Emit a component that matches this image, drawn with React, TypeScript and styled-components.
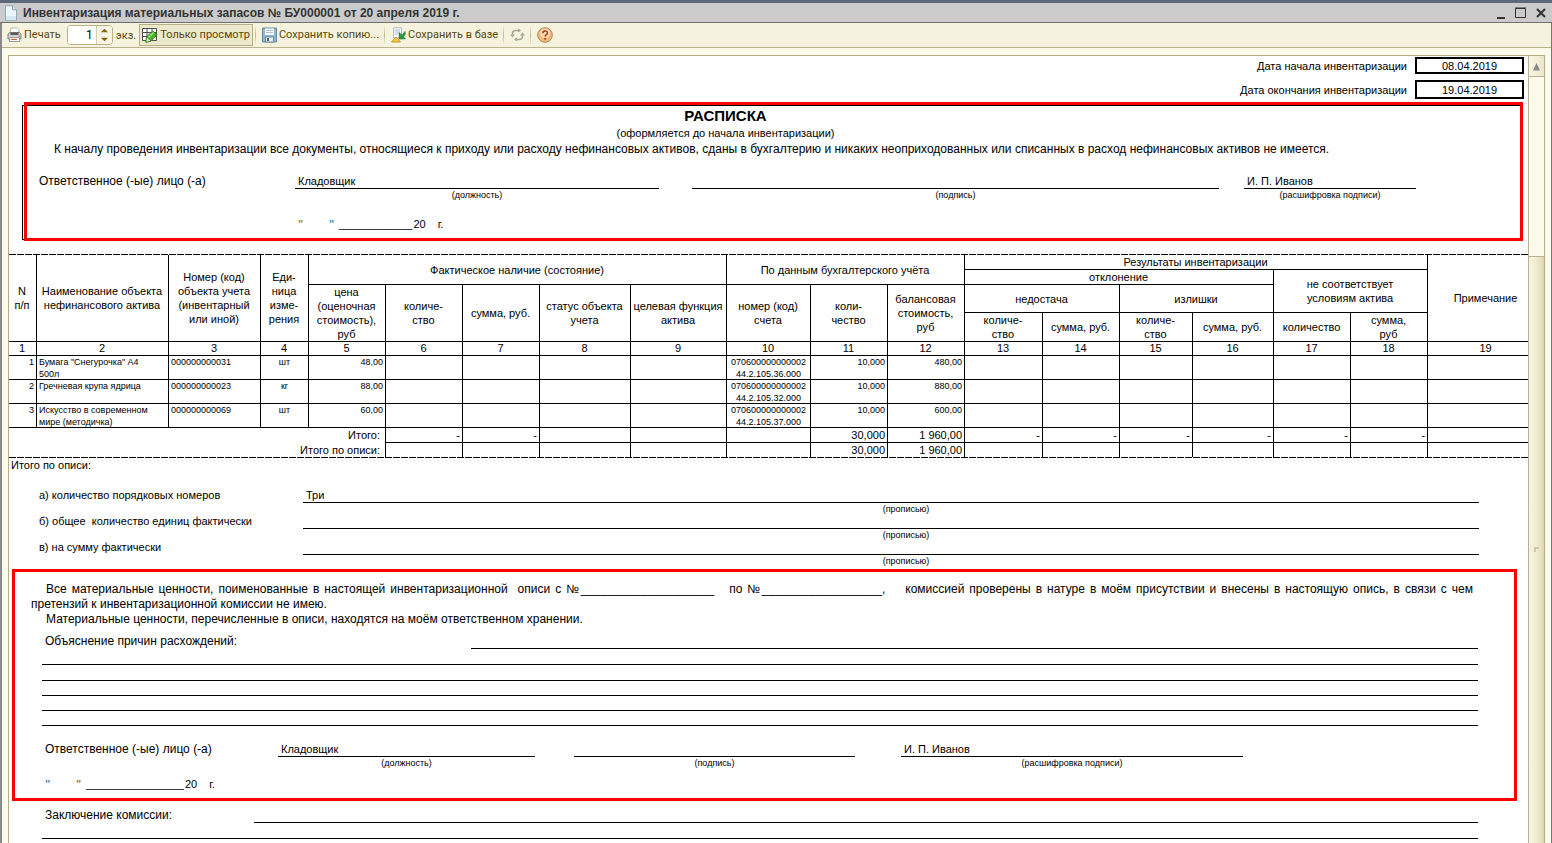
import React from "react";
import styled, { createGlobalStyle } from "styled-components";

const GlobalStyle = createGlobalStyle`
  *, *::before, *::after { box-sizing: border-box; }
  html, body { margin: 0; padding: 0; }
  body { background: #fcfaeb; overflow: hidden; }
  button, input { font: inherit; color: inherit; }
`;

/* ---------- window chrome ---------- */

const Window = styled.div`
  height: 100vh;
  display: flex;
  flex-direction: column;
  font-family: Roboto, "Liberation Sans", sans-serif;
  font-size: 11px;
  color: #000;
`;

const TitleBar = styled.header`
  flex: none;
  height: 23px;
  display: flex;
  align-items: center;
  padding: 0 4px 0 4px;
  background: #cbcbcb;
  border-top: 3px solid #5b6a7b;
  border-bottom: 1px solid #6e6e6e;
`;

const TitleText = styled.h1`
  flex: 1;
  margin: 0 0 0 4px;
  font-family: "Liberation Sans", Arial, sans-serif;
  font-size: 12px;
  line-height: 16px;
  font-weight: 700;
  color: #333;
  white-space: nowrap;
`;

const WindowButtons = styled.div`
  display: flex;
  gap: 6px;
`;

const WindowButton = styled.button`
  width: 14px;
  height: 14px;
  padding: 0;
  border: 0;
  background: none;
  display: flex;
`;

const Body = styled.div`
  flex: 1;
  min-height: 0;
  display: flex;
  flex-direction: column;
  border-left: 2px solid #8a8a8a;
  border-right: 1px solid #777;
  background: #fcfaeb;
`;

const Toolbar = styled.div`
  flex: none;
  height: 25px;
  display: flex;
  align-items: center;
  padding-left: 3px;
  background: #f5f2dd;
  border-bottom: 1px solid #b9b38c;
  color: #5a4a0c;
  white-space: nowrap;
`;

const ToolButton = styled.button<{ $pressed?: boolean }>`
  height: 22px;
  display: flex;
  align-items: center;
  gap: 2px;
  padding: 0 2px 0 1px;
  line-height: 16px;
  background: ${(p) => (p.$pressed ? "#ece8cb" : "transparent")};
  border: 1px solid ${(p) => (p.$pressed ? "#b5ae86" : "transparent")};
`;

const Separator = styled.span`
  width: 1px;
  height: 20px;
  margin: 0 4px 0 2px;
  background: linear-gradient(#f5f2dd, #bdb792, #f5f2dd);
`;

const Copies = styled.label`
  display: flex;
  align-items: center;
  gap: 3px;
  margin: 0 3px 0 3px;
`;

const Spinner = styled.span`
  display: flex;
  width: 46px;
  height: 20px;
  border: 1px solid #b9b187;
  border-radius: 4px;
  background: #fff;
  overflow: hidden;
`;

const CopiesInput = styled.input`
  width: 28px;
  padding: 0 3px 0 0;
  border: 0;
  outline: 0;
  background: #fff;
  color: #000;
  font-size: 12px;
  text-align: right;
`;

const Steps = styled.span`
  flex: 1;
  display: flex;
  flex-direction: column;
  border-left: 1px solid #d6d0b0;
  background: #f8f5e4;
`;

const StepButton = styled.button`
  flex: 1;
  display: flex;
  align-items: center;
  justify-content: center;
  padding: 0;
  border: 0;
  background: none;
`;

/* ---------- viewer ---------- */

const Viewer = styled.main`
  flex: 1;
  min-height: 0;
  display: flex;
  margin: 7px 6px 0 6px;
  border: 1px solid #b3ac86;
  border-bottom: 0;
  background: #fefefe;
`;

const Sheet = styled.div`
  flex: 1;
  min-width: 0;
  overflow: hidden;
  font-family: "Liberation Sans", Arial, sans-serif;
  font-size: 11px;
  line-height: 14px;
`;

const ScrollBar = styled.div`
  flex: none;
  width: 16px;
  display: flex;
  flex-direction: column;
  border-left: 1px solid #b9b392;
  background: #fcfaeb;
`;

const ScrollUp = styled.button`
  height: 21px;
  padding: 0;
  border: 0;
  border-bottom: 1px solid #b9b392;
  background: linear-gradient(90deg, #f8f5e2, #ebe7cc);
  display: flex;
  align-items: center;
  justify-content: center;
`;

const ScrollThumb = styled.div`
  flex: 1;
  margin-top: 179px;
  border-top: 1px solid #b9b392;
  background: linear-gradient(90deg, #f7f4e0 0, #efebd0 50%, #e6e0bd 80%, #ddd5ae 100%);
  display: flex;
  align-items: center;
  justify-content: center;
`;

/* ---------- dates ---------- */

const Dates = styled.dl`
  display: grid;
  grid-template-columns: 1fr 109px;
  grid-template-rows: 17px 19px;
  gap: 6px 8px;
  align-items: center;
  margin: 0;
  padding: 1px 4px 6px 0;
  text-align: right;
`;

const DateLabel = styled.dt``;

const DateBox = styled.dd`
  margin: 0;
  height: 100%;
  display: flex;
  align-items: center;
  justify-content: center;
  border: 2px solid #000;
`;

/* ---------- receipt ---------- */

const Receipt = styled.section`
  position: relative;
  margin: 0 6px 14px 13px;
  padding: 2px 0 8px;
  border: 1px solid #000;

  &::after {
    content: "";
    position: absolute;
    inset: -4px -2px -2px 1px;
    border: 3px solid #f00;
    pointer-events: none;
  }
`;

const ReceiptHead = styled.div`
  padding-right: 93px;
  text-align: center;
`;

const ReceiptTitle = styled.h2`
  margin: 0 0 2px;
  font-size: 15px;
  line-height: 16px;
  font-weight: 700;
`;

const Statement = styled.p`
  margin: 2px 0 18px 31px;
  font-size: 12px;
  white-space: nowrap;
`;

const ReceiptSign = styled.div`
  padding: 0 105px 0 16px;
`;

const SignGrid = styled.div<{ $columns: string }>`
  display: grid;
  grid-template-columns: ${(p) => p.$columns};
`;

const SignLabel = styled.div`
  font-size: 12px;
`;

const Field = styled.div<{ $column: number; $shift?: number }>`
  grid-column: ${(p) => p.$column};
  min-width: 0;
  text-align: center;

  small {
    display: block;
    height: 11px;
    padding-left: ${(p) => p.$shift ?? 0}px;
    font-size: 9px;
    line-height: 12px;
  }
`;

const FieldValue = styled.div`
  height: 15px;
  padding-left: 3px;
  border-bottom: 1px solid #000;
  text-align: left;
`;

const DateLine = styled.div<{ $indent: number; $top: number }>`
  display: flex;
  height: 14px;
  margin-top: ${(p) => p.$top}px;
  padding-left: ${(p) => p.$indent}px;
  white-space: pre;
`;

const Quote = styled.span<{ $wide?: boolean; $warm?: boolean }>`
  width: ${(p) => (p.$wide ? 31 : 10)}px;
  font-weight: 700;
  color: ${(p) => (p.$warm ? "#b5772c" : "#3f8fc4")};
`;

const Year = styled.span`
  padding: 0 12px 0 1px;
`;

/* ---------- table ---------- */

/* The last column runs on under the scroll bar. */
const TableWrap = styled.div`
  width: calc(100% + 17px);
`;

const Dashes = styled.div`
  height: 1px;
  background: repeating-linear-gradient(90deg, #000 0 7px, #fff 7px 8px);
`;

const Table = styled.table`
  width: 100%;
  table-layout: fixed;
  border-collapse: separate;
  border-spacing: 0;
`;

const Row = styled.tr<{ $height: number }>`
  height: ${(p) => p.$height}px;
`;

const Head = styled.th<{ $number?: boolean }>`
  padding: 0 2px 1px 0;
  font-weight: 400;
  line-height: ${(p) => (p.$number ? 13 : 14)}px;
  text-align: center;
  white-space: pre;
  box-shadow: inset -1px -1px #000;
`;

type Align = "left" | "right" | "center";

const Cell = styled.td<{ $align?: Align }>`
  padding: 0 3px 0 2px;
  vertical-align: top;
  text-align: ${(p) => p.$align ?? "left"};
  font-size: 9px;
  box-shadow: inset -1px -1px #000;
`;

const CellText = styled.div`
  height: 23px;
  line-height: 12px;
  white-space: pre;
`;

const TotalCell = styled.td<{ $last?: boolean }>`
  padding: 0 3px ${(p) => (p.$last ? 0 : 1)}px 0;
  text-align: right;
  box-shadow: ${(p) => (p.$last ? "inset -1px 0 #000" : "inset -1px -1px #000")};
`;

const TotalLabel = styled.td<{ $last?: boolean }>`
  padding: 0 6px ${(p) => (p.$last ? 0 : 1)}px 0;
  text-align: right;
  box-shadow: inset -1px 0 #000;
`;

/* ---------- summary ---------- */

const SummaryTitle = styled.div`
  margin: 0 0 16px 2px;
`;

const SummaryRow = styled.div`
  display: grid;
  grid-template-columns: 264px 1fr;
  padding: 0 49px 0 30px;
  white-space: pre;
`;

const Custody = styled.section`
  margin: 3px 11px 7px 3px;
  padding: 10px 0 7px;
  border: 3px solid #f00;
`;

const CustodyText = styled.p`
  margin: 0 41px 0 16px;
  font-size: 12px;
  line-height: 15px;
  text-align: justify;
  text-indent: 15px;
`;

const Explain = styled.div<{ $label: number; $right: number; $left: number; $top: number }>`
  display: grid;
  grid-template-columns: ${(p) => p.$label}px 1fr;
  height: 15px;
  margin: ${(p) => p.$top}px ${(p) => p.$right}px 0 ${(p) => p.$left}px;
  font-size: 12px;
`;

const Rule = styled.div`
  border-bottom: 1px solid #000;
`;

const BlankLine = styled.div<{ $height: number; $left: number; $right: number }>`
  height: ${(p) => p.$height}px;
  margin: 0 ${(p) => p.$right}px 0 ${(p) => p.$left}px;
  border-bottom: 1px solid #000;
`;

const CustodySign = styled.div`
  margin: 16px 0 0 30px;
`;

/* ---------- icons ---------- */

const PageIcon = () => (
  <svg width="15" height="16" viewBox="0 0 15 16">
    <path d="M1.500.8h7l4 4v10.500h-11z" fill="#eef6fb" stroke="#8fa9b8" />
    <path d="M8.500.8v4h4" fill="#cfe3ee" stroke="#8fa9b8" />
    <path d="M2 11h10v3.500H2z" fill="#d5e8f2" />
  </svg>
);

const PrinterIcon = () => (
  <svg width="15" height="16" viewBox="0 0 15 16">
    <path d="M4 1h6l2 2v4H3z" fill="#fff" stroke="#a8a8a8" strokeWidth=".8" />
    <path d="M1 7 3 5.500h9.500L14 7v5H1z" fill="#d2d2d2" stroke="#777" strokeWidth=".9" />
    <path d="M3.500 5.500h8v2.500h-8z" fill="#5a5a5a" />
    <path d="M3 10.500h9l1 4H2z" fill="#fff" stroke="#888" strokeWidth=".8" />
    <path d="M4 12.500h6" stroke="#d0622e" strokeWidth="1.200" />
    <circle cx="12.300" cy="9.200" r=".8" fill="#e2502a" />
  </svg>
);

const ViewOnlyIcon = () => (
  <svg width="17" height="16" viewBox="0 0 17 16">
    <path d="M1.500 1.500h14v12h-14z" fill="#fff" />
    <path d="M1.500 1.500h14v12h-14zM1.500 5.500h14M1.500 9.500h14M6 1.500v12M11 1.500v12" fill="none" stroke="#4c4c4c" />
    <path d="m5.500 10 6-6 4.500 3.500-6 6.500-5 1.300z" fill="#4db530" stroke="#2a7a18" strokeWidth=".9" />
    <path d="m7.500 10.500 5-5" stroke="#a8e58c" strokeWidth="1.300" />
    <path d="m5.500 10 4.500 4-5 1.300z" fill="#e6f4dd" stroke="#2a7a18" strokeWidth=".7" />
  </svg>
);

const DiskIcon = () => (
  <svg width="15" height="16" viewBox="0 0 15 16">
    <path d="M.5 1h14v14H.5z" fill="#93b4cc" stroke="#6589a3" />
    <path d="M3 1.500h9V8H3z" fill="#f6fafc" />
    <path d="M4 3.500h7M4 5.500h7" stroke="#9db4c4" strokeWidth=".8" />
    <path d="M3.500 10h8v5h-8z" fill="#e6ecef" stroke="#5c7a90" strokeWidth=".8" />
    <path d="M5 11h2v3H5z" fill="#46677f" />
  </svg>
);

const SaveBaseIcon = () => (
  <svg width="15" height="16" viewBox="0 0 15 16">
    <path d="M2.500.8h8v10h-8z" fill="#fafcff" stroke="#a9b5bd" strokeWidth=".9" />
    <path d="M4 3h5M4 5h5M4 7h3" stroke="#9fb4c8" strokeWidth=".9" />
    <path d="M14 4.500 11 8l-3-2.500V12h6.500L12.500 9.800 14.500 7z" fill="#2f9a3c" stroke="#16702a" strokeWidth=".5" />
    <path d="M.5 15 5 10l4.500 5z" fill="#f6c744" stroke="#c8912a" strokeWidth=".9" />
  </svg>
);

const RefreshIcon = () => (
  <svg width="15" height="16" viewBox="0 0 15 16" fill="none" stroke="#a3ab92" strokeWidth="1.500">
    <path d="M2.500 8V6.500a3 3 0 0 1 3-3H10" />
    <path d="M12.500 7.500V9.500a3 3 0 0 1-3 3H5" />
    <path d="M0 7.500h5L2.500 10.500zM10 8.500h5L12.500 5.500z" fill="#a3ab92" stroke="none" />
    <path d="M8 1.500v4l3-2zM7 10.500v4l-3-2z" fill="#a3ab92" stroke="none" />
  </svg>
);

const HelpIcon = () => (
  <svg width="16" height="16" viewBox="0 0 16 16">
    <circle cx="8" cy="8" r="7.300" fill="#f6b878" stroke="#a98468" />
    <circle cx="8" cy="6.500" r="5" fill="#fbd9b0" />
    <path d="M5.800 6.300c0-3 4.600-3 4.600-.3 0 1.600-2.300 1.700-2.300 3.500" fill="none" stroke="#a0401c" strokeWidth="1.500" />
    <circle cx="8.100" cy="11.700" r="1" fill="#a0401c" />
  </svg>
);

const StepArrow = ({ down }: { down?: boolean }) => (
  <svg width="7" height="7" viewBox="0 0 8 8">
    <path d={down ? "M0 2h8L4 6z" : "M0 6h8L4 2z"} fill="#7a6410" />
  </svg>
);

/* ---------- data ---------- */

const columnWidths = [28, 132, 92, 48, 77, 77, 77, 91, 96, 84, 77, 77, 78, 77, 73, 81, 77, 77, 117];

const items = [
  { name: "Бумага \"Снегурочка\" А4\n500л", code: "000000000031", unit: "шт", price: "48,00", account: "070600000000002\n44.2.105.36.000", qty: "10,000", sum: "480,00" },
  { name: "Гречневая крупа ядрица", code: "000000000023", unit: "кг", price: "88,00", account: "070600000000002\n44.2.105.32.000", qty: "10,000", sum: "880,00" },
  { name: "Искусство в современном\nмире (методичка)", code: "000000000069", unit: "шт", price: "60,00", account: "070600000000002\n44.2.105.37.000", qty: "10,000", sum: "600,00" },
];

const totals = ["-", "-", "", "", "", "30,000", "1 960,00", "-", "-", "-", "-", "-", "-", ""];
const listTotals = ["", "", "", "", "", "30,000", "1 960,00", "", "", "", "", "", "", ""];

const summary = [
  { label: "а) количество порядковых номеров", value: "Три" },
  { label: "б) общее  количество единиц фактически", value: "" },
  { label: "в) на сумму фактически", value: "" },
];

const signFields = [
  { value: "Кладовщик", caption: "(должность)" },
  { value: "", caption: "(подпись)" },
  { value: "И. П. Иванов", caption: "(расшифровка подписи)" },
];

function Signatures({ columns }: { columns: string }) {
  return (
    <SignGrid $columns={columns}>
      <SignLabel>Ответственное (-ые) лицо (-а)</SignLabel>
      {signFields.map((f, i) => (
        <Field key={f.caption} $column={2 + i * 2}>
          <FieldValue>{f.value}</FieldValue>
          <small>{f.caption}</small>
        </Field>
      ))}
    </SignGrid>
  );
}

function InventoryTable() {
  return (
    <TableWrap>
      <Dashes />
      <Table>
        <colgroup>
          {columnWidths.map((w, i) => (
            <col key={i} width={w} />
          ))}
        </colgroup>
        <thead>
          <Row $height={15}>
            <Head rowSpan={4}>{"N\nп/п"}</Head>
            <Head rowSpan={4}>{"Наименование объекта\nнефинансового актива"}</Head>
            <Head rowSpan={4}>{"Номер (код)\nобъекта учета\n(инвентарный\nили иной)"}</Head>
            <Head rowSpan={4}>{"Еди-\nница\nизме-\nрения"}</Head>
            <Head colSpan={5} rowSpan={2}>Фактическое наличие (состояние)</Head>
            <Head colSpan={3} rowSpan={2}>По данным бухгалтерского учёта</Head>
            <Head colSpan={6}>Результаты инвентаризации</Head>
            <Head rowSpan={4}>Примечание</Head>
          </Row>
          <Row $height={15}>
            <Head colSpan={4}>отклонение</Head>
            <Head colSpan={2} rowSpan={2}>{"не соответствует\nусловиям актива"}</Head>
          </Row>
          <Row $height={28}>
            <Head rowSpan={2}>{"цена\n(оценочная\nстоимость),\nруб"}</Head>
            <Head rowSpan={2}>{"количе-\nство"}</Head>
            <Head rowSpan={2}>сумма, руб.</Head>
            <Head rowSpan={2}>{"статус объекта\nучета"}</Head>
            <Head rowSpan={2}>{"целевая функция\nактива"}</Head>
            <Head rowSpan={2}>{"номер (код)\nсчета"}</Head>
            <Head rowSpan={2}>{"коли-\nчество"}</Head>
            <Head rowSpan={2}>{"балансовая\nстоимость,\nруб"}</Head>
            <Head colSpan={2}>недостача</Head>
            <Head colSpan={2}>излишки</Head>
          </Row>
          <Row $height={29}>
            {["количе-\nство", "сумма, руб.", "количе-\nство", "сумма, руб.", "количество", "сумма,\nруб"].map((t, i) => (
              <Head key={i}>{t}</Head>
            ))}
          </Row>
          <Row $height={14}>
            {columnWidths.map((_, i) => (
              <Head key={i} $number>{i + 1}</Head>
            ))}
          </Row>
        </thead>
        <tbody>
          {items.map((it, n) => {
            const cells: [string, Align][] = [
              [String(n + 1), "right"], [it.name, "left"], [it.code, "left"], [it.unit, "center"], [it.price, "right"],
              ["", "left"], ["", "left"], ["", "left"], ["", "left"],
              [it.account, "center"], [it.qty, "right"], [it.sum, "right"],
              ["", "left"], ["", "left"], ["", "left"], ["", "left"], ["", "left"], ["", "left"], ["", "left"],
            ];
            return (
              <Row key={it.code} $height={24}>
                {cells.map(([text, align], i) => (
                  <Cell key={i} $align={align}><CellText>{text}</CellText></Cell>
                ))}
              </Row>
            );
          })}
        </tbody>
        <tfoot>
          <Row $height={15}>
            <TotalLabel colSpan={5}>Итого:</TotalLabel>
            {totals.map((t, i) => <TotalCell key={i}>{t}</TotalCell>)}
          </Row>
          <Row $height={14}>
            <TotalLabel colSpan={5} $last>Итого по описи:</TotalLabel>
            {listTotals.map((t, i) => <TotalCell key={i} $last>{t}</TotalCell>)}
          </Row>
        </tfoot>
      </Table>
      <Dashes />
    </TableWrap>
  );
}

export default function App() {
  return (
    <Window>
      <GlobalStyle />
      <TitleBar>
        <PageIcon />
        <TitleText>Инвентаризация материальных запасов № БУ000001 от 20 апреля 2019 г.</TitleText>
        <WindowButtons>
          <WindowButton aria-label="Свернуть">
            <svg width="14" height="14" viewBox="0 0 14 14"><path d="M3 11h8v2H3z" fill="#333" /></svg>
          </WindowButton>
          <WindowButton aria-label="Развернуть">
            <svg width="14" height="14" viewBox="0 0 14 14"><path d="M1.500 2.500h10v9h-10zM1 2h11" fill="none" stroke="#333" /></svg>
          </WindowButton>
          <WindowButton aria-label="Закрыть">
            <svg width="14" height="14" viewBox="0 0 14 14"><path d="m3 3 8 8M11 3l-8 8" stroke="#333" strokeWidth="2" /></svg>
          </WindowButton>
        </WindowButtons>
      </TitleBar>
      <Body>
        <Toolbar>
          <ToolButton><PrinterIcon />Печать</ToolButton>
          <Copies>
            <Spinner>
              <CopiesInput defaultValue="1" aria-label="Количество экземпляров" />
              <Steps>
                <StepButton aria-label="Больше"><StepArrow /></StepButton>
                <StepButton aria-label="Меньше"><StepArrow down /></StepButton>
              </Steps>
            </Spinner>
            экз.
          </Copies>
          <ToolButton $pressed aria-pressed="true"><ViewOnlyIcon />Только просмотр</ToolButton>
          <Separator />
          <ToolButton><DiskIcon />Сохранить копию...</ToolButton>
          <Separator />
          <ToolButton><SaveBaseIcon />Сохранить в базе</ToolButton>
          <Separator />
          <ToolButton aria-label="Обновить"><RefreshIcon /></ToolButton>
          <Separator />
          <ToolButton aria-label="Справка"><HelpIcon /></ToolButton>
        </Toolbar>
        <Viewer>
          <Sheet>
            <Dates>
              <DateLabel>Дата начала инвентаризации</DateLabel>
              <DateBox>08.04.2019</DateBox>
              <DateLabel>Дата окончания инвентаризации</DateLabel>
              <DateBox>19.04.2019</DateBox>
            </Dates>

            <Receipt>
              <ReceiptHead>
                <ReceiptTitle>РАСПИСКА</ReceiptTitle>
                <div>(оформляется до начала инвентаризации)</div>
              </ReceiptHead>
              <Statement>
                К началу проведения инвентаризации все документы, относящиеся к приходу или расходу нефинансовых активов, сданы в бухгалтерию и никаких неоприходованных или списанных в расход нефинансовых активов не имеется.
              </Statement>
              <ReceiptSign>
                <Signatures columns="256px 364fr 33fr 527fr 25fr 172fr" />
              </ReceiptSign>
              <DateLine $indent={275} $top={17}>
                <Quote $wide $warm>"</Quote>
                <Quote>"</Quote>
                ____________<Year>20</Year>г.
              </DateLine>
            </Receipt>

            <InventoryTable />

            <SummaryTitle>Итого по описи:</SummaryTitle>
            {summary.map((s) => (
              <SummaryRow key={s.label}>
                <span>{s.label}</span>
                <Field $column={2} $shift={30}>
                  <FieldValue>{s.value}</FieldValue>
                  <small>(прописью)</small>
                </Field>
              </SummaryRow>
            ))}

            <Custody>
              <CustodyText>
                Все материальные ценности, поименованные в настоящей инвентаризационной&nbsp; описи с №____________________&nbsp;&nbsp; по №__________________,&nbsp;&nbsp;&nbsp; комиссией проверены в натуре в моём присутствии и внесены в настоящую опись, в связи с чем претензий к инвентаризационной комиссии не имею.
              </CustodyText>
              <CustodyText>Материальные ценности, перечисленные в описи, находятся на моём ответственном хранении.</CustodyText>
              <Explain $label={426} $left={30} $right={36} $top={7}>
                <span>Объяснение причин расхождений:</span>
                <Rule />
              </Explain>
              {[16, 16, 15, 15, 15].map((h, i) => (
                <BlankLine key={i} $height={h} $left={27} $right={36} />
              ))}
              <CustodySign>
                <Signatures columns="233px 257fr 39fr 281fr 46fr 342fr 271fr" />
              </CustodySign>
              <DateLine $indent={30} $top={9}>
                <Quote $wide>"</Quote>
                <Quote $warm>"</Quote>
                ________________<Year>20</Year>г.
              </DateLine>
            </Custody>

            <Explain $label={209} $left={36} $right={50} $top={0}>
              <span>Заключение комиссии:</span>
              <Rule />
            </Explain>
            <BlankLine $height={16} $left={33} $right={50} />
          </Sheet>
          <ScrollBar>
            <ScrollUp aria-label="Вверх">
              <svg width="9" height="9" viewBox="0 0 9 9"><path d="M1 8.500h7L4.500 1z" fill="#8a8a84" /></svg>
            </ScrollUp>
            <ScrollThumb>
              <svg width="6" height="6" viewBox="0 0 6 6"><path d="M1 5V1h4" fill="none" stroke="#c5bd9a" strokeWidth="1.500" /></svg>
            </ScrollThumb>
          </ScrollBar>
        </Viewer>
      </Body>
    </Window>
  );
}
